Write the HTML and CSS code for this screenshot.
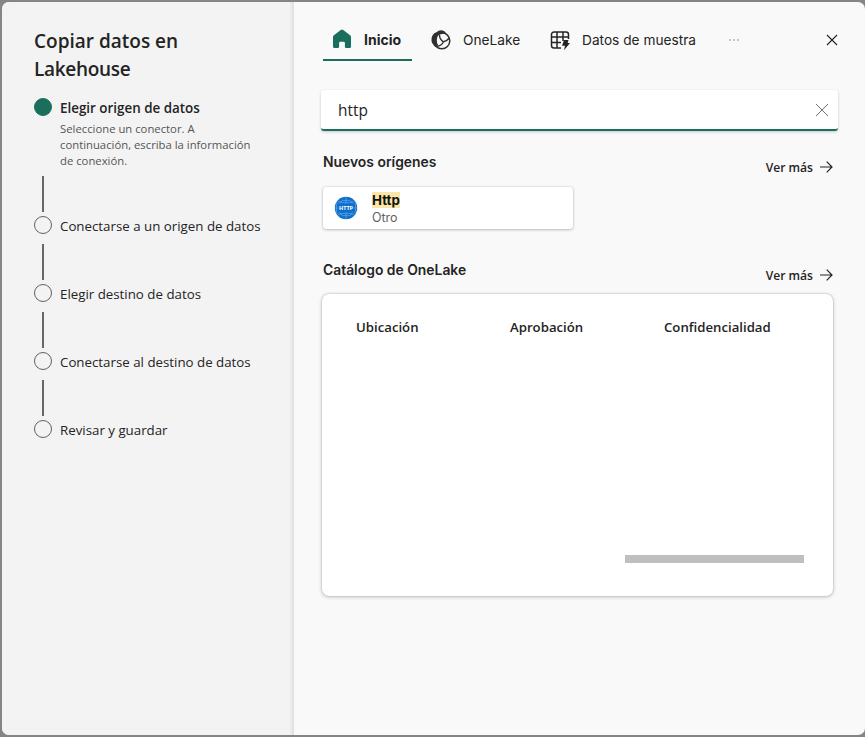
FILE: index.html
```html
<!DOCTYPE html>
<html lang="es">
<head>
<meta charset="utf-8">
<title>Copiar datos en Lakehouse</title>
<link rel="stylesheet" href="styles.css">
</head>
<body>
<div class="dialog">
  <aside class="side">
    <h1 class="title">Copiar datos en<br><span class="tight">Lakehouse</span></h1>
    <ol class="steps">
      <li class="step active">
        <span class="dot"></span>
        <div class="text"><b class="label">Elegir origen de datos</b>
          <p class="desc">Seleccione un conector. A<br>continuación, escriba la información<br>de conexión.</p></div>
      </li>
      <li class="step"><span class="dot"></span><span class="label">Conectarse a un origen de datos</span></li>
      <li class="step"><span class="dot"></span><span class="label">Elegir destino de datos</span></li>
      <li class="step"><span class="dot"></span><span class="label">Conectarse al destino de datos</span></li>
      <li class="step"><span class="dot"></span><span class="label">Revisar y guardar</span></li>
    </ol>
  </aside>
  <main class="main">
    <header class="top">
      <nav class="tabs">
        <a class="tab home selected">
          <svg width="20" height="20" viewBox="0 0 20 20"><path fill="#196f5b" d="M8.700 1.100a2 2 0 0 1 2.600 0l6.800 5.200A2.200 2.200 0 0 1 19 8v9.500a1.500 1.500 0 0 1-1.500 1.500h-3.300a1.300 1.300 0 0 1-1.300-1.300V14a1.200 1.200 0 0 0-1.200-1.200H8.300A1.200 1.200 0 0 0 7.100 14v3.700A1.300 1.300 0 0 1 5.800 19H2.500A1.500 1.500 0 0 1 1 17.500V8a2.200 2.200 0 0 1 .9-1.700z"/></svg>
          <span>Inicio</span>
        </a>
        <a class="tab lake">
          <svg width="20" height="20" viewBox="0 0 20 20"><circle cx="10.800" cy="10.800" r="8" fill="none" stroke="#303030" stroke-width="1.500"/><path fill="#303030" d="M5.500 2.200Q9.500-1.500 13.700 1.500L16 4.200Q11 2.700 7 5.500Q4.500 10.500 7 14.800L5.500 17.500Q-.5 14 .6 8Q1.500 3.500 5.500 2.200z"/><path fill="none" stroke="#303030" stroke-width="1.400" d="M8.500 5Q8.500 9.500 12.500 11.800Q16 11 18.300 8M6 16.300Q10.500 16 12.500 11.800"/></svg>
          <span>OneLake</span>
        </a>
        <a class="tab sample">
          <svg width="20" height="20" viewBox="0 0 20 20"><path fill="none" stroke="#242424" stroke-width="1.500" d="M11 18H4a2.500 2.500 0 0 1-2.500-2.500v-11A2.500 2.500 0 0 1 4 2h12a2.500 2.500 0 0 1 2.500 2.500V9M1.500 7h17M1.500 12.500H11M7 2v16M13 2v9"/><path fill="#242424" d="M14 10h4.500l-.8 3H20l-6 7.300 1-4.600h-3z"/></svg>
          <span>Datos de muestra</span>
        </a>
        <svg class="more" width="12" height="4" viewBox="0 0 12 4"><g fill="#777"><circle cx="2" cy="2" r=".75"/><circle cx="6" cy="2" r=".75"/><circle cx="10" cy="2" r=".75"/></g></svg>
      </nav>
      <svg class="close" width="12" height="12" viewBox="0 0 12 12"><path fill="none" stroke="#242424" stroke-width="1.100" d="M1 1l10 10M11 1L1 11"/></svg>
    </header>
    <div class="search"><span>http</span>
      <svg width="14" height="14" viewBox="0 0 14 14"><path fill="none" stroke="#616161" stroke-width=".9" d="M1 1l12 12M13 1L1 13"/></svg>
    </div>
    <section class="head"><h2>Nuevos orígenes</h2>
      <a class="see"><span>Ver más</span><svg width="14" height="14" viewBox="0 0 14 14"><path fill="none" stroke="#242424" stroke-width="1.200" d="M1 7h12M7.700 1.700L13 7l-5.300 5.300"/></svg></a>
    </section>
    <div class="source">
      <svg width="24" height="24" viewBox="0 0 24 24"><circle cx="12" cy="12" r="11.200" fill="#0f6fcb"/><g fill="none" stroke="#6fb2ee" stroke-width=".6"><path d="M5.500 8Q8 2.500 12 5q4-2.500 6.500 3M5.500 16q2.500 5.500 6.500 3q4 2.500 6.500-3M1 12h3M20 12h3M12 1v6M12 17v6M4 5.500q8 3 16 0M4 18.500q8-3 16 0M3 6Q1.500 12 3 18M21 6q1.500 6 0 12"/></g><text class="badge" x="12" y="14" text-anchor="middle" textLength="14" lengthAdjust="spacingAndGlyphs">HTTP</text></svg>
      <div class="sourcetext"><b class="name">Http</b><span class="kind">Otro</span></div>
    </div>
    <section class="head second"><h2>Catálogo de OneLake</h2>
      <a class="see"><span>Ver más</span><svg width="14" height="14" viewBox="0 0 14 14"><path fill="none" stroke="#242424" stroke-width="1.200" d="M1 7h12M7.700 1.700L13 7l-5.300 5.300"/></svg></a>
    </section>
    <div class="catalog">
      <div class="columns"><b>Ubicación</b><b>Aprobación</b><b>Confidencialidad</b></div>
      <div class="scroll"></div>
    </div>
  </main>
</div>
</body>
</html>
```
FILE: styles.css
```css
* { box-sizing: border-box; }
body { margin: 0; height: 737px; overflow: hidden; background: #858585; padding: 2px 0 2px 2px; color: #242424; font-family: "Open Sans", "Noto Sans", sans-serif; }
h1, h2, p, ol { margin: 0; padding: 0; }
svg { display: block; flex: none; overflow: visible; }
span, b { white-space: nowrap; }
.dialog { height: 733px; display: flex; border-radius: 7px; overflow: hidden; background: #f9f9f9; }
.side { width: 292px; flex: none; padding: 25px 32px; background: linear-gradient(to left, #dedede, #f3f3f3 5px); }
.title { font-size: 19px; line-height: 28px; font-weight: 600; }
.tight { letter-spacing: -.3px; }
.steps { list-style: none; margin-top: 11px; }
.step { display: flex; align-items: flex-start; gap: 8px; height: 68px; position: relative; }
.step.active { height: 118px; }
.dot { width: 18px; height: 18px; flex: none; border: 1px solid #616161; border-radius: 50%; margin-top: 4px; }
.active .dot { background: #196f5b; border-color: #196f5b; }
.step:not(:last-child)::after { content: ""; position: absolute; left: 8px; bottom: 0; width: 2px; height: 36px; background: #666; }
.label { display: block; font-size: 13.3px; line-height: 20px; margin-top: 4px; font-weight: 400; }
.active .label { font-size: 13.4px; font-weight: 600; }
.desc { margin-top: 3px; font-size: 11.3px; line-height: 16px; color: #555; white-space: nowrap; }
.main { flex: 1; padding: 0 27px; }
.top { display: flex; justify-content: space-between; height: 60px; }
.tabs { display: flex; margin-left: 2px; font: 400 13.7px/20px Inter, sans-serif; }
.tab { display: flex; align-items: center; gap: 12px; height: 59px; padding-top: 17px; }
.home { width: 89px; padding-left: 9px; padding-top: 19px; border-bottom: 2px solid #196f5b; font-size: 14px; font-weight: 700; }
.home svg { margin-top: -2px; }
.lake { margin-left: 19px; width: 100px; }
.sample { margin-left: 19px; }
.more { margin: 36px 0 0 32px; }
.close { margin-top: 32px; }
.search { width: 517px; height: 41px; margin-top: 28px; padding: 0 9px 0 17px; background: #fff; border-bottom: 2px solid #196f5b; border-radius: 3px; box-shadow: 0 1px 3px #0003; display: flex; justify-content: space-between; align-items: center; font-size: 15.4px; }
.search span { padding-top: 2px; }
.head { display: flex; justify-content: space-between; width: 510px; margin: 21px 0 0 2px; height: 28px; }
.head h2 { font: 600 13.88px/20px Inter, sans-serif; }
.see { display: flex; align-items: center; gap: 6px; font-size: 12.1px; line-height: 20px; font-weight: 600; height: 20px; margin-top: 5px; }
.see span { padding-top: 2px; }
.source { display: flex; align-items: center; width: 250px; height: 42px; margin: 7px 0 0 2px; padding: 0 11px; gap: 14px; background: #fff; border-radius: 3px; box-shadow: 0 0 2px #0003, 0 1px 3px #0003; }
.badge { font: 700 5.3px "Open Sans", sans-serif; fill: #fff; }
.sourcetext { display: flex; flex-direction: column; align-items: flex-start; margin-top: 2px; font: 400 12.4px/16px Inter, sans-serif; color: #616161; }
.name { background: #fae6a7; color: #111; font-size: 13.3px; line-height: 16px; font-weight: 700; }
.kind { line-height: 16px; padding-top: 2px; }
.second { margin-top: 31px; }
.catalog { width: 511px; height: 302px; margin: 6px 0 0 1px; background: #fff; border-radius: 7px; box-shadow: 0 0 2px #0004, 0 1px 4px #0003; padding: 23px 29px 33px 34px; display: flex; flex-direction: column; justify-content: space-between; }
.columns { display: grid; grid-template-columns: repeat(3, 154px); font-size: 13.2px; line-height: 20px; }
.columns b { font-weight: 600; }
.scroll { width: 179px; height: 8px; background: #bfbfbf; align-self: flex-end; }
```
